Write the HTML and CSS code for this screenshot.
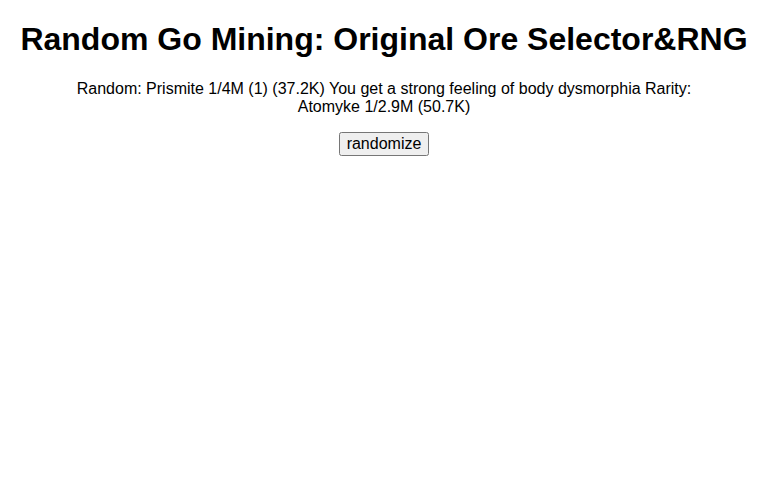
FILE: index.html
```html
<!DOCTYPE html>
<html>
<head>
<meta charset="utf-8">
<link rel="stylesheet" href="styles.css">
</head>
<body>
<h1 class="title">Random Go Mining: Original Ore Selector&amp;RNG</h1>
<p class="result">Random: Prismite 1/4M (1) (37.2K) You get a strong feeling of body dysmorphia Rarity: Atomyke 1/2.9M (50.7K)</p>
<div class="actions"><button class="btn">randomize</button></div>
</body>
</html>
```
FILE: styles.css
```css
body {
  margin: 0;
  padding: 0 8px;
  font-family: "Liberation Sans", Arial, sans-serif;
  text-align: center;
  background: #fff;
  color: #000;
}
.title {
  font-size: 32px;
  font-weight: bold;
  margin: 21.44px 0;
}
.result {
  font-size: 16px;
  max-width: 640px;
  margin: 16px auto;
}
.btn {
  font-family: "Liberation Sans", Arial, sans-serif;
  font-size: 16px;
}
```
